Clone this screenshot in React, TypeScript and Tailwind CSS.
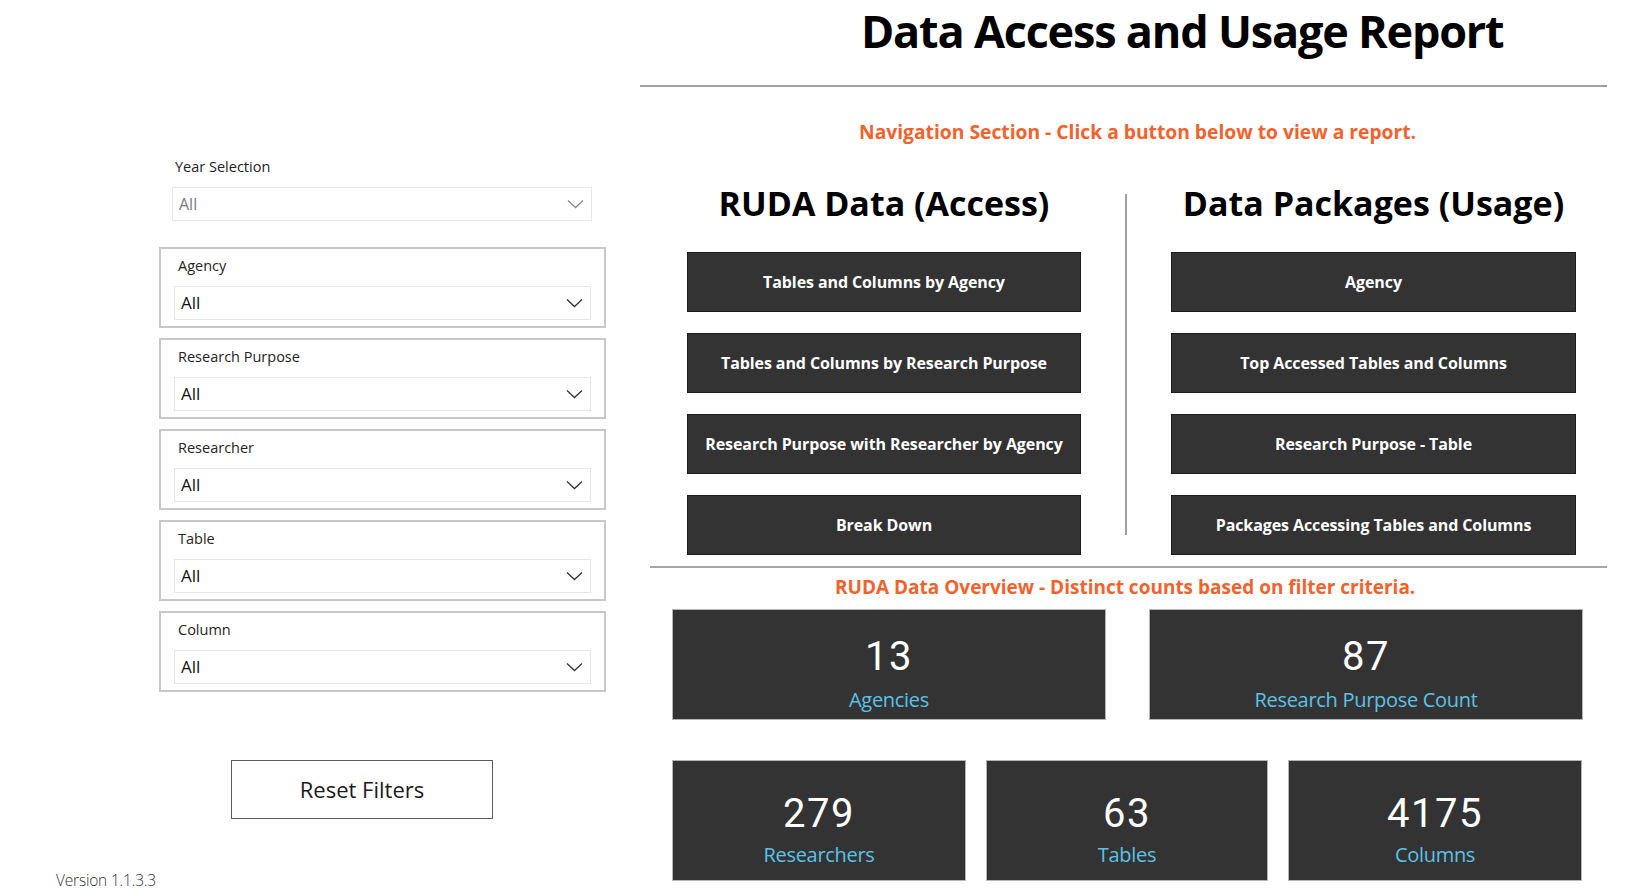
import React from 'react';

const filters = ['Agency', 'Research Purpose', 'Researcher', 'Table', 'Column'];

const accessButtons = [
  'Tables and Columns by Agency',
  'Tables and Columns by Research Purpose',
  'Research Purpose with Researcher by Agency',
  'Break Down',
];

const usageButtons = [
  'Agency',
  'Top Accessed Tables and Columns',
  'Research Purpose - Table',
  'Packages Accessing Tables and Columns',
];

const Chevron: React.FC<{ color: string }> = ({ color }) => (
  <svg width="17" height="10" viewBox="0 0 17 10" fill="none">
    <polyline points="1,1.5 8.5,8.5 16,1.5" stroke={color} strokeWidth="1.3" />
  </svg>
);

const Dropdown: React.FC<{ muted?: boolean }> = ({ muted }) => (
  <div className="flex h-[34px] items-center justify-between border border-[#e6e6e6] bg-white pl-[6px] pr-[7px]">
    <span className={muted ? 'text-[16px] text-[#7a7a7a]' : 'text-[17px] text-[#111]'}>All</span>
    <Chevron color={muted ? '#8a8a8a' : '#333'} />
  </div>
);

const NavButton: React.FC<{ label: string }> = ({ label }) => (
  <button className="flex h-[60px] w-full items-center justify-center border border-[#1c1c1c] bg-[#333333] text-[16px] font-bold tracking-[-0.1px] text-white">
    {label}
  </button>
);

const StatCard: React.FC<{ value: string; label: string; tall?: boolean }> = ({ value, label, tall }) => (
  <div
    className={
      tall
        ? 'flex h-[121px] flex-col items-center border border-[#b4b4b4] bg-[#333333] pt-[29px]'
        : 'flex h-[111px] flex-col items-center border border-[#b4b4b4] bg-[#333333] pt-[23px]'
    }
  >
    <div className="font-['Roboto',sans-serif] text-[40px] leading-[48px] tracking-[1.5px] text-white">{value}</div>
    <div
      className={
        tall
          ? 'mt-[3px] text-[20px] leading-[28px] tracking-[-0.3px] text-[#5bc2e7]'
          : 'mt-[5px] text-[20px] leading-[28px] tracking-[-0.3px] text-[#5bc2e7]'
      }
    >
      {label}
    </div>
  </div>
);

export default function App() {
  return (
    <div className="flex h-[893px] w-[1628px] overflow-hidden bg-white font-['Open_Sans',sans-serif] text-[#252423]">
      {/* filters panel */}
      <aside className="flex w-[640px] flex-col pt-[157px]">
        <div className="ml-[159px] flex flex-col">
          <div className="ml-[13px] w-[420px]">
            <div className="pl-[3px] text-[14.5px] leading-[20px]">Year Selection</div>
            <div className="mt-[10px]">
              <Dropdown muted />
            </div>
          </div>

          <div className="mt-[26px] flex flex-col gap-[10px]">
            {filters.map((f) => (
              <div key={f} className="h-[81px] w-[447px] border-2 border-[#c8c8c8] px-[13px] pt-[7px]">
                <div className="pl-[4px] text-[14.5px] leading-[20px]">{f}</div>
                <div className="mt-[10px]">
                  <Dropdown />
                </div>
              </div>
            ))}
          </div>

          <button className="ml-[72px] mt-[68px] flex h-[59px] w-[262px] items-center justify-center border-[1.5px] border-[#5a5a5a] bg-white text-[22px] text-[#1a1a1a]">
            Reset Filters
          </button>
        </div>

        <div className="ml-[56px] mt-[51px] text-[15.5px] font-light leading-[20px] tracking-[-0.2px] text-[#333]">
          Version 1.1.3.3
        </div>
      </aside>

      {/* report area */}
      <main className="flex flex-1 flex-col pr-[21px]">
        <h1 className="pl-[221px] text-[45px] font-bold leading-[62px] tracking-[-1.2px] text-black">
          Data Access and Usage Report
        </h1>
        <div className="mt-[23px] h-[2px] w-full bg-[#a0a0a0]" />

        <div className="ml-[219px] mt-[33px] text-[19.25px] font-bold leading-[24px] text-[#f4622c]">
          Navigation Section - Click a button below to view a report.
        </div>

        <div className="ml-[47px] mt-[37px] flex">
          <div className="flex w-[394px] flex-col">
            <h2 className="text-center text-[34px] font-bold leading-[44px] text-black">RUDA Data (Access)</h2>
            <div className="mt-[27px] flex flex-col gap-[21px]">
              {accessButtons.map((b) => (
                <NavButton key={b} label={b} />
              ))}
            </div>
          </div>

          <div className="ml-[44px] mt-[13px] h-[341px] w-[2px] bg-[#a0a0a0]" />

          <div className="ml-[44px] flex w-[405px] flex-col">
            <h2 className="text-center text-[34px] font-bold leading-[44px] text-black">Data Packages (Usage)</h2>
            <div className="mt-[27px] flex flex-col gap-[21px]">
              {usageButtons.map((b) => (
                <NavButton key={b} label={b} />
              ))}
            </div>
          </div>
        </div>

        <div className="ml-[10px] mt-[11px] h-[2px] bg-[#a6a6a6]" />

        <div className="ml-[195px] mt-[7px] text-[19px] font-bold leading-[24px] text-[#f4622c]">
          RUDA Data Overview - Distinct counts based on filter criteria.
        </div>

        <div className="ml-[32px] mt-[10px] grid w-[911px] grid-cols-2 gap-[43px]">
          <StatCard value="13" label="Agencies" />
          <StatCard value="87" label="Research Purpose Count" />
        </div>

        <div className="ml-[32px] mt-[40px] grid grid-cols-[294px_282px_294px] gap-[20px]">
          <StatCard value="279" label="Researchers" tall />
          <StatCard value="63" label="Tables" tall />
          <StatCard value="4175" label="Columns" tall />
        </div>
      </main>
    </div>
  );
}
